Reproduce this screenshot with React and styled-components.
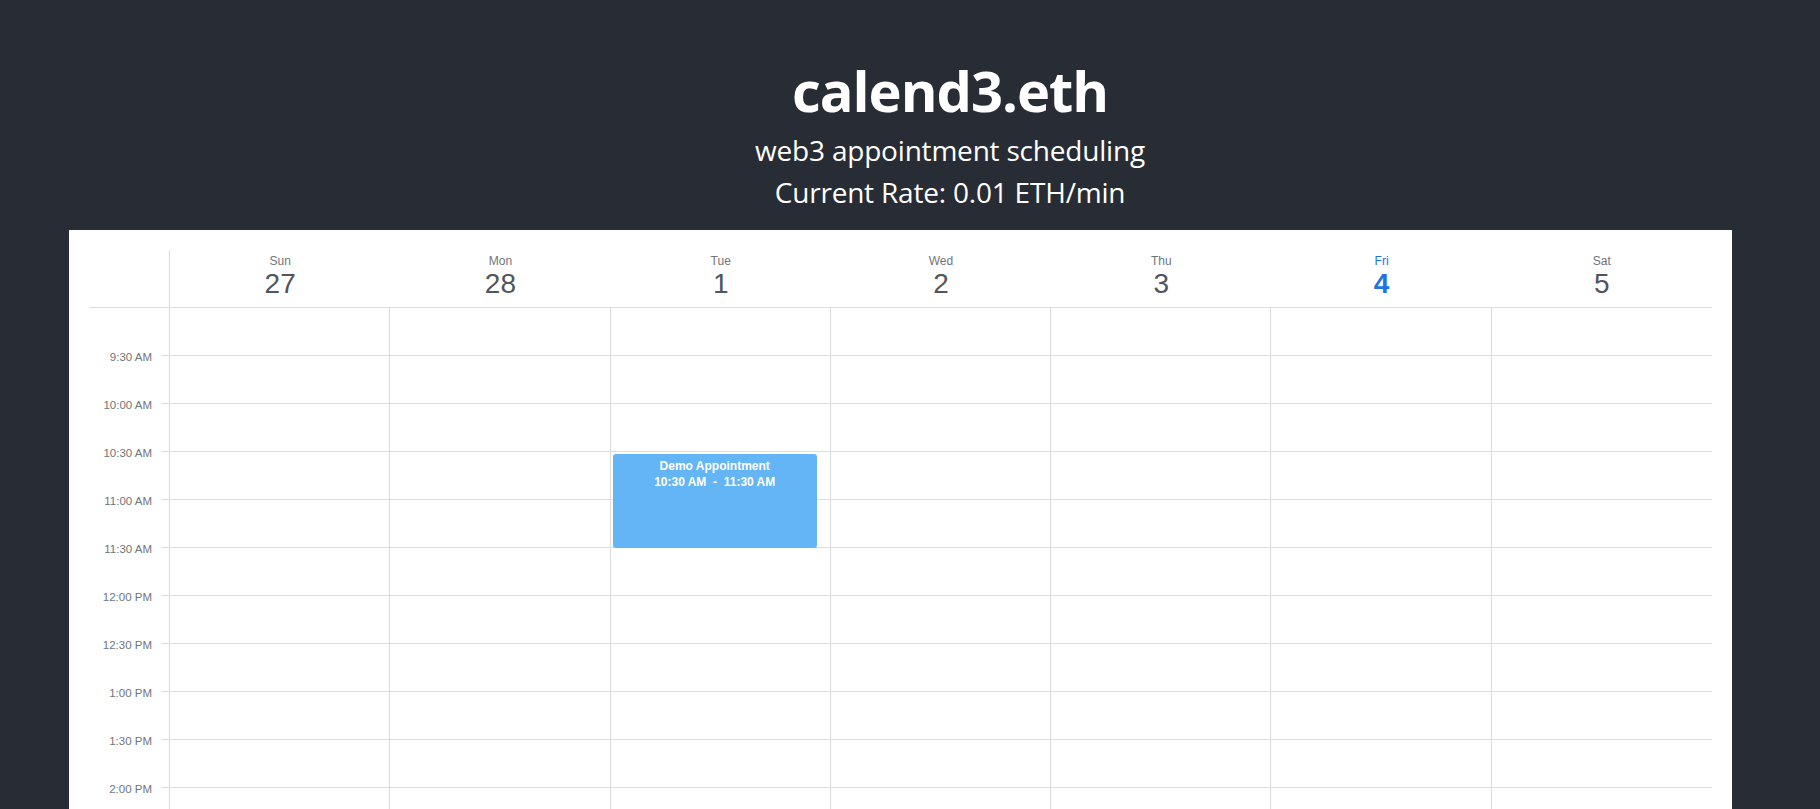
import React from 'react';
import styled, { createGlobalStyle } from 'styled-components';

const SLOT = 48;
const START_HOUR = 9;

const days = [
  { name: 'Sun', date: 27 },
  { name: 'Mon', date: 28 },
  { name: 'Tue', date: 1 },
  { name: 'Wed', date: 2 },
  { name: 'Thu', date: 3 },
  { name: 'Fri', date: 4, today: true },
  { name: 'Sat', date: 5 },
];

const appointments = [
  { day: 2, title: 'Demo Appointment', start: 10.5, end: 11.5, label: '10:30 AM  -  11:30 AM' },
];

const formatTime = (h) => {
  const hour = Math.floor(h);
  const min = h % 1 ? '30' : '00';
  const suffix = hour >= 12 ? 'PM' : 'AM';
  const display = hour > 12 ? hour - 12 : hour;
  return `${display}:${min} ${suffix}`;
};

// slot end times: 9:30, 10:00 ... (the rest is below the fold)
const slots = Array.from({ length: 11 }, (_, i) => START_HOUR + (i + 1) * 0.5);

const App = () => {
  return (
    <>
      <GlobalStyle />
      <Page>
        <Header>
          <Title>calend3.eth</Title>
          <Subtitle>web3 appointment scheduling</Subtitle>
          <Rate>Current Rate: 0.01 ETH/min</Rate>
        </Header>
        <Panel>
          <DayHeaderRow>
            <GutterHead />
            {days.map((d) => (
              <DayHead key={d.name} $today={d.today}>
                <DayName>{d.name}</DayName>
                <DayNumber $today={d.today}>{d.date}</DayNumber>
              </DayHead>
            ))}
          </DayHeaderRow>
          <Body>
            <Gutter>
              {slots.map((t) => (
                <GutterSlot key={t}>
                  <TimeLabel>{formatTime(t)}</TimeLabel>
                  <Tick />
                </GutterSlot>
              ))}
            </Gutter>
            {days.map((d, i) => (
              <DayColumn key={d.name} $last={i === days.length - 1}>
                {slots.map((t) => (
                  <Cell key={t} />
                ))}
                {appointments
                  .filter((a) => a.day === i)
                  .map((a) => (
                    <Appointment
                      key={a.title}
                      style={{
                        top: (a.start - START_HOUR) * 2 * SLOT + 2,
                        height: (a.end - a.start) * 2 * SLOT - 2,
                      }}
                    >
                      <div>{a.title}</div>
                      <AppointmentTime>{a.label}</AppointmentTime>
                    </Appointment>
                  ))}
              </DayColumn>
            ))}
          </Body>
        </Panel>
      </Page>
    </>
  );
};

const GlobalStyle = createGlobalStyle`
  html, body {
    margin: 0;
    padding: 0;
    background-color: #282c34;
    overflow: hidden;
  }
  body {
    font-family: 'Open Sans', 'Noto Sans', sans-serif;
  }
`;

const Page = styled.div`
  height: 809px;
  overflow: hidden;
`;

const Header = styled.header`
  display: flex;
  flex-direction: column;
  align-items: center;
  color: white;
  padding-top: 58px;
  padding-left: 80px;
  padding-bottom: 18px;
`;

const Title = styled.h1`
  margin: 0;
  font-size: 56px;
  line-height: 64px;
  font-weight: 700;
  letter-spacing: -1px;
`;

const Subtitle = styled.div`
  margin-top: 8px;
  font-size: 28px;
  line-height: 40px;
  letter-spacing: -0.2px;
`;

const Rate = styled.div`
  margin-top: 2px;
  font-size: 28px;
  line-height: 40px;
  letter-spacing: -0.2px;
`;

const Panel = styled.div`
  margin-left: 69px;
  width: 1663px;
  box-sizing: border-box;
  background: #fff;
  padding: 20px 20px 0;
  font-family: 'Liberation Sans', Arial, sans-serif;
`;

const DayHeaderRow = styled.div`
  display: grid;
  grid-template-columns: 81px repeat(7, 1fr);
  height: 58px;
  box-sizing: border-box;
  border-bottom: 1px solid #dadce0;
`;

const GutterHead = styled.div`
  border-right: 1px solid #dadce0;
`;

const DayHead = styled.div`
  display: flex;
  flex-direction: column;
  align-items: center;
  padding-top: 4px;
  color: ${(p) => (p.$today ? '#1a73e8' : '#70757a')};
`;

const DayName = styled.div`
  font-size: 12px;
  line-height: 15px;
`;

const DayNumber = styled.div`
  font-size: 28px;
  line-height: 30px;
  color: ${(p) => (p.$today ? '#1a73e8' : '#51565c')};
  font-weight: ${(p) => (p.$today ? 700 : 400)};
`;

const Body = styled.div`
  display: grid;
  grid-template-columns: 81px repeat(7, 1fr);
  height: 600px;
`;

const Gutter = styled.div`
  border-right: 1px solid #dadce0;
`;

const GutterSlot = styled.div`
  height: ${SLOT}px;
  display: flex;
  justify-content: flex-end;
  align-items: flex-end;
`;

const TimeLabel = styled.span`
  font-size: 11.5px;
  line-height: 12px;
  color: #70757a;
  margin-right: 9px;
  transform: translateY(7px);
`;

const Tick = styled.span`
  width: 8px;
  height: 1px;
  background: #dadce0;
`;

const DayColumn = styled.div`
  position: relative;
  border-right: ${(p) => (p.$last ? 'none' : '1px solid #dadce0')};
`;

const Cell = styled.div`
  height: ${SLOT}px;
  box-sizing: border-box;
  border-bottom: 1px solid #dadce0;
`;

const Appointment = styled.div`
  position: absolute;
  left: 2px;
  right: 13px;
  box-sizing: border-box;
  background: #64b5f6;
  border-radius: 3px;
  color: #fff;
  text-align: center;
  padding-top: 4px;
  font-size: 12px;
  line-height: 16px;
  font-weight: 700;
`;

const AppointmentTime = styled.div`
  white-space: pre;
`;

export default App;
